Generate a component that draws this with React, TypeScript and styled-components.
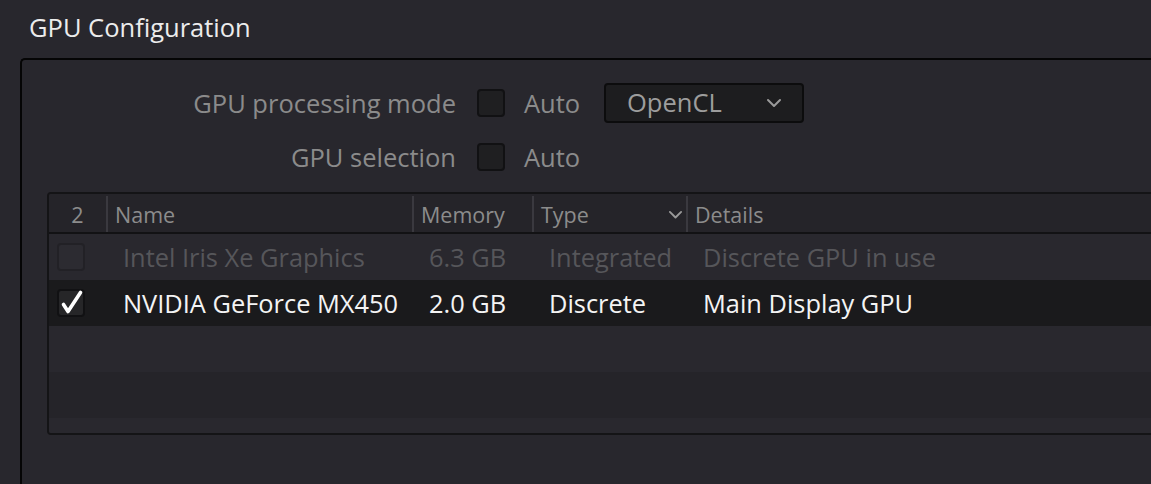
import styled, { createGlobalStyle } from "styled-components"

const GlobalStyle = createGlobalStyle`
    html, body {
        margin: 0;
        padding: 0;
        background: #28272d;
        overflow: hidden;
    }
    body {
        font-family: "Open Sans", "Noto Sans", sans-serif;
    }
`

type Gpu = {
    name: string
    memory: string
    type: string
    details: string
    checked: boolean
    disabled: boolean
}

const gpus: Gpu[] = [
    { name: "Intel Iris Xe Graphics", memory: "6.3 GB", type: "Integrated", details: "Discrete GPU in use", checked: false, disabled: true },
    { name: "NVIDIA GeForce MX450", memory: "2.0 GB", type: "Discrete", details: "Main Display GPU", checked: true, disabled: false },
]

const Chevron = ({ size = 16 }: { size?: number }) => (
    <svg width={size} height={size * 0.625} viewBox="0 0 16 10" fill="none">
        <path d="M2 2 L8 8 L14 2" stroke="#9a9a9a" strokeWidth="2" strokeLinecap="round" strokeLinejoin="round" />
    </svg>
)

const Check = () => (
    <svg width="28" height="28" viewBox="0 0 28 28" fill="none">
        <path d="M6.5 15.5 L11 22.5 L23.5 3.5" stroke="#ffffff" strokeWidth="3.6" strokeLinecap="round" strokeLinejoin="round" />
    </svg>
)

export default function App() {
    const emptyRows = [0, 1, 2]
    return (
        <Page>
            <GlobalStyle />
            <Title>GPU Configuration</Title>
            <GroupBox>
                <Form>
                    <Label>GPU processing mode</Label>
                    <Box />
                    <Auto>Auto</Auto>
                    <Dropdown>
                        <span>OpenCL</span>
                        <Chevron />
                    </Dropdown>
                    <Label>GPU selection</Label>
                    <Box />
                    <Auto>Auto</Auto>
                </Form>
                <Table>
                    <HeaderRow>
                        <HeadCell center>2</HeadCell>
                        <HeadCell>Name</HeadCell>
                        <HeadCell>Memory</HeadCell>
                        <HeadCell>Type<HeadChevron><Chevron size={15} /></HeadChevron></HeadCell>
                        <HeadCell last>Details</HeadCell>
                    </HeaderRow>
                    {gpus.map((g, i) => (
                        <Row key={g.name} selected={g.checked} odd={i % 2 === 0}>
                            <CheckCell>
                                <Box faded={g.disabled} checked={g.checked}>
                                    {g.checked && <CheckMark><Check /></CheckMark>}
                                </Box>
                            </CheckCell>
                            <Cell disabled={g.disabled}>{g.name}</Cell>
                            <Cell disabled={g.disabled}>{g.memory}</Cell>
                            <Cell disabled={g.disabled}>{g.type}</Cell>
                            <Cell disabled={g.disabled}>{g.details}</Cell>
                        </Row>
                    ))}
                    {emptyRows.map(i => (
                        <Row key={i} odd={i % 2 === 0} short={i === 2} />
                    ))}
                </Table>
            </GroupBox>
        </Page>
    )
}

const Page = styled.div`
    width: 1151px;
    height: 484px;
    background: #28272d;
    overflow: hidden;
`

const Title = styled.div`
    padding: 10px 0 0 29px;
    height: 40px;
    font-size: 25.5px;
    line-height: 34px;
    color: #ececec;
`

const GroupBox = styled.div`
    margin: 8px 0 0 20px;
    width: 1200px;
    height: 500px;
    border-top: 2px solid #050505;
    border-left: 2px solid #050505;
    border-top-left-radius: 5px;
    box-sizing: border-box;
`

const Form = styled.div`
    display: grid;
    grid-template-columns: 455px 28px 99px 200px;
    grid-auto-rows: 54px;
    align-items: center;
    padding-top: 16px;
`

const Label = styled.div`
    text-align: right;
    font-size: 25.5px;
    color: #8b8b8b;
    white-space: nowrap;
    padding-right: 21px;
`

const Box = styled.div<{ faded?: boolean; checked?: boolean }>`
    position: relative;
    width: 28px;
    height: 28px;
    box-sizing: border-box;
    border: 2px solid ${p => p.faded ? "#222126" : "#111113"};
    border-radius: 4px;
    background: ${p => p.faded ? "#2c2b31" : p.checked ? "#262628" : "#1f1f21"};
`

const CheckMark = styled.span`
    position: absolute;
    left: -2px;
    top: -2px;
    display: flex;
`

const Auto = styled.div`
    font-size: 25.5px;
    color: #8b8b8b;
    padding-left: 19px;
`

const Dropdown = styled.div`
    width: 200px;
    height: 40px;
    box-sizing: border-box;
    border: 2px solid #0c0c0d;
    border-radius: 4px;
    background: #1d1d1f;
    display: flex;
    align-items: center;
    justify-content: space-between;
    padding: 0 20px 0 21px;
    font-size: 25.5px;
    color: #9d9d9d;
    span {
        line-height: 1;
    }
`

const Table = styled.div`
    margin: 8px 0 0 25px;
    width: 1140px;
    border: 2px solid #141416;
    border-radius: 4px;
    box-sizing: border-box;
    overflow: hidden;
`

const columns = "59px 306px 120px 154px 1fr"

const HeaderRow = styled.div`
    display: grid;
    grid-template-columns: ${columns};
    height: 38px;
    background: #252429;
    border-bottom: 2px solid #121214;
`

const HeadCell = styled.div<{ center?: boolean; last?: boolean }>`
    position: relative;
    display: flex;
    align-items: center;
    justify-content: ${p => p.center ? "center" : "flex-start"};
    padding-left: ${p => p.center ? "0" : "7px"};
    font-size: 21.5px;
    color: #8c8c8c;
    border-right: ${p => p.last ? "none" : "2px solid #3a393f"};
    margin: 2px 0 0;
`

const HeadChevron = styled.span`
    position: absolute;
    right: 3px;
    top: 14px;
    display: flex;
`

const Row = styled.div<{ selected?: boolean; odd?: boolean; short?: boolean }>`
    display: grid;
    grid-template-columns: ${columns};
    height: ${p => p.short ? "15px" : "46px"};
    align-items: center;
    background: ${p => p.selected ? "#1a1a1c" : p.odd ? "#29282e" : "#252429"};
`

const CheckCell = styled.div`
    display: flex;
    justify-content: flex-start;
    padding-left: 8px;
`

const Cell = styled.div<{ disabled?: boolean }>`
    padding-left: 15px;
    font-size: 25.4px;
    white-space: nowrap;
    color: ${p => p.disabled ? "#56565a" : "#f4f4f4"};
`
